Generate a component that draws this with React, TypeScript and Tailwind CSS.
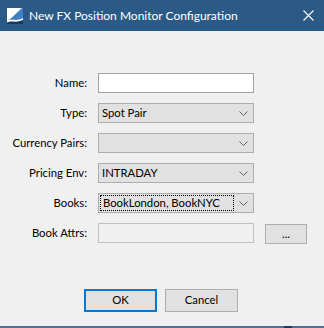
import React from 'react';

const Chevron = () => (
  <svg width="9" height="5" viewBox="0 0 9 5" className="shrink-0">
    <path d="M0.5 0.5 L4.5 4.5 L8.5 0.5" fill="none" stroke="#606060" strokeWidth="1" />
  </svg>
);

const Select: React.FC<{ value?: string; focused?: boolean }> = ({ value, focused }) => (
  <div className="flex h-[20px] w-[156px] items-center border border-[#adadad] bg-[#e1e1e1] pl-[1px] pr-[5px]">
    <div
      className={`flex h-[16px] flex-1 items-center whitespace-nowrap pl-[2px] ${
        focused ? 'border border-dotted border-black' : ''
      }`}
    >
      {value}
    </div>
    <div className="ml-[5px]">
      <Chevron />
    </div>
  </div>
);

const rows: { label: string; kind: 'input' | 'select'; value?: string; focused?: boolean }[] = [
  { label: 'Name:', kind: 'input' },
  { label: 'Type:', kind: 'select', value: 'Spot Pair' },
  { label: 'Currency Pairs:', kind: 'select' },
  { label: 'Pricing Env:', kind: 'select', value: 'INTRADAY' },
  { label: 'Books:', kind: 'select', value: 'BookLondon, BookNYC', focused: true },
];

export default function App() {
  return (
    <div
      className="flex h-[328px] w-[324px] flex-col bg-[#f0f0f0] text-[11.3px] text-black"
      style={{ fontFamily: 'Lato, "Noto Sans", sans-serif' }}
    >
      {/* Title bar */}
      <div className="flex h-[31px] shrink-0 items-center bg-[#2b5a87] pl-[7px] pr-[10px] text-white">
        <svg width="16" height="16" viewBox="0 0 16 16">
          <rect width="16" height="16" fill="#3f7fc4" />
          <path d="M0 0 L15 0 L0 14 Z" fill="#ffffff" />
          <path d="M0 16 L0 13 C5 10 9 14 16 10 L16 16 Z" fill="#ffffff" />
          <path d="M0 16 L0 14.5 C5 12 9 15.5 16 12 L16 16 Z" fill="#15365f" />
        </svg>
        <span className="ml-[6px] whitespace-nowrap text-[12px] leading-none">New FX Position Monitor Configuration</span>
        <span className="ml-auto">
          <svg width="11" height="11" viewBox="0 0 11 11">
            <path d="M0.5 0.5 L10.5 10.5 M10.5 0.5 L0.5 10.5" stroke="#ffffff" strokeWidth="1.1" />
          </svg>
        </span>
      </div>

      {/* Form */}
      <div className="flex flex-col gap-[10px] pt-[42px]">
        {rows.map((r) => (
          <div key={r.label} className="flex h-[20px] items-center">
            <div className="w-[88px] whitespace-nowrap pr-[1px] text-right">{r.label}</div>
            <div className="ml-[10px]">
              {r.kind === 'input' ? (
                <div className="h-[20px] w-[156px] border border-[#a0a0a0] bg-white" />
              ) : (
                <Select value={r.value} focused={r.focused} />
              )}
            </div>
          </div>
        ))}
        <div className="flex h-[20px] items-center">
          <div className="w-[88px] whitespace-nowrap pr-[1px] text-right">Book Attrs:</div>
          <div className="ml-[10px] h-[20px] w-[156px] border border-[#c0c0c0] bg-[#f0f0f0]" />
          <button className="ml-[11px] mt-[2px] flex h-[20px] w-[42px] items-center justify-center border border-[#adadad] bg-[#e1e1e1] leading-none">
            ...
          </button>
        </div>
      </div>

      {/* Buttons */}
      <div className="mt-[46px] flex gap-[8px] pl-[84px]">
        <button className="flex h-[23px] w-[73px] items-center justify-center border-2 border-[#0078d7] bg-[#e1e1e1]">
          OK
        </button>
        <button className="flex h-[23px] w-[73px] items-center justify-center border border-[#adadad] bg-[#e1e1e1]">
          Cancel
        </button>
      </div>

      {/* Bottom window edge */}
      <div className="mt-auto flex h-[2px] bg-[#54708d]">
        <div className="ml-[284px] w-[8px] bg-[#1d3d66]" />
      </div>
    </div>
  );
}
